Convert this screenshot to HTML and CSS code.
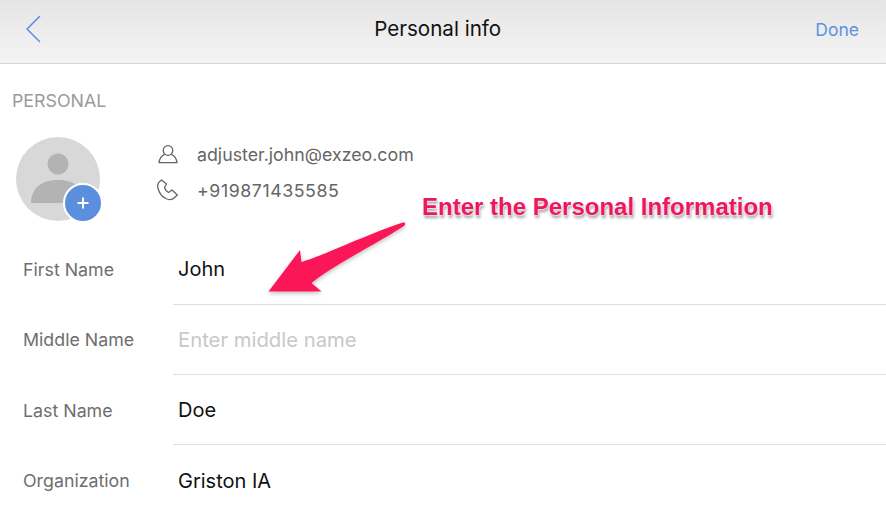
FILE: index.html
```html
<!DOCTYPE html>
<html>
	<head>
		<meta charset="utf-8" />
		<title>Personal info</title>
		<link rel="stylesheet" href="styles.css">
	</head>
	<body>
		<main class="screen">
			<header class="topbar">
				<svg class="back" width="18" height="28" viewBox="0 0 18 28">
					<path d="M15.5 1.5 L3 14 L15.5 26.5" />
				</svg>
				<h1>Personal info</h1>
				<span class="done">Done</span>
			</header>

			<h2 class="section-title">PERSONAL</h2>

			<section class="profile">
				<div class="avatar">
					<svg width="84" height="84" viewBox="0 0 84 84">
						<circle cx="42" cy="42" r="42" fill="#d8d8d8" />
						<circle cx="42" cy="27" r="10.5" fill="#b3b3b3" />
						<path d="M15 66 C15 50 27 43 42 43 C57 43 69 50 69 66 Z" fill="#b3b3b3" />
					</svg>
					<span class="avatar-add">
						<svg width="14" height="14" viewBox="0 0 14 14">
							<path d="M7 1.5 V12.5 M1.5 7 H12.5" />
						</svg>
					</span>
				</div>
				<div class="contacts">
					<div class="contact">
						<svg width="22" height="22" viewBox="0 0 22 22">
							<circle cx="11" cy="7.5" r="4.8" />
							<path d="M7.6 11.4 C5 12.6 2.6 15 2 19.7 H20 C19.4 15 17 12.6 14.4 11.4" />
						</svg>
						<span>adjuster.john@exzeo.com</span>
					</div>
					<div class="contact">
						<svg width="22" height="22" viewBox="0 0 22 22">
							<path d="M4.5 1 C1.5 3 0 6 1 9.5 C2.5 14.5 6 18.5 10 20 C13 21 15.5 20.5 17 19 L20.3 16 L15 11 L11.5 13.5 C9.5 12.5 8 10.5 7.5 8.5 L9.5 5 Z" />
						</svg>
						<span class="phone">+919871435585</span>
					</div>
				</div>
			</section>

			<form class="fields">
				<div class="field">
					<label>First Name</label>
					<div class="value">John</div>
				</div>
				<div class="field">
					<label>Middle Name</label>
					<div class="value placeholder">Enter middle name</div>
				</div>
				<div class="field">
					<label>Last Name</label>
					<div class="value">Doe</div>
				</div>
				<div class="field">
					<label>Organization</label>
					<div class="value">Griston IA</div>
				</div>
			</form>

			<!-- screenshot annotation, sits over the form -->
			<svg class="note-arrow" width="160" height="90" viewBox="0 0 160 90">
				<defs>
					<filter id="arrow-shadow" x="-20%" y="-20%" width="140%" height="150%">
						<feDropShadow dx="0" dy="2" stdDeviation="2" flood-color="#000" flood-opacity="0.25" />
					</filter>
				</defs>
				<path d="M8.5 74.5 L40 33 L41.5 45 C65 38 105 18 143 5.5 C145.5 5 146 7.5 144 9 C115 28 75 47 51.5 66 L61.5 74.5 Z" fill="#fb1458" filter="url(#arrow-shadow)" />
			</svg>
			<div class="note-text">Enter the Personal Information</div>
		</main>
	</body>
</html>
```

FILE: styles.css
```css
body {
	margin: 0;
	background: #fff;
	font-family: Inter, 'Noto Sans', sans-serif;
}
.screen {
	position: relative;
	height: 505px;
	overflow: hidden;
}
.topbar {
	display: flex;
	align-items: center;
	justify-content: space-between;
	box-sizing: border-box;
	height: 64px;
	padding: 0 27px 6px 24px;
	background: linear-gradient(#e5e5e5, #f4f4f4);
	border-bottom: 1px solid #d4d4d4;
}
.topbar h1 {
	margin: 0 0 0 18px;
	font-size: 20.6px;
	font-weight: 400;
	color: #111;
}
.back path {
	fill: none;
	stroke: #5b93e0;
	stroke-width: 1.6;
	stroke-linecap: round;
	stroke-linejoin: round;
}
.done {
	font-size: 17.5px;
	color: #5b93e0;
	padding-top: 2px;
}
.section-title {
	margin: 27px 0 0 12px;
	font-size: 17.8px;
	line-height: 20px;
	font-weight: 400;
	color: #9a9a9a;
}
.profile {
	display: flex;
	margin: 26px 0 0 16px;
}
.avatar {
	position: relative;
	width: 84px;
	height: 84px;
}
.avatar-add {
	position: absolute;
	right: -3px;
	bottom: -2px;
	display: flex;
	align-items: center;
	justify-content: center;
	box-sizing: border-box;
	width: 40px;
	height: 40px;
	border: 2px solid #fff;
	border-radius: 50%;
	background: #5b8fdd;
}
.avatar-add path {
	fill: none;
	stroke: #fff;
	stroke-width: 2;
}
.contacts {
	display: flex;
	flex-direction: column;
	gap: 14px;
	margin: 6px 0 0 57px;
}
.contact {
	display: flex;
	align-items: center;
	gap: 18px;
	height: 22px;
	font-size: 17.8px;
	color: #666;
}
.phone {
	letter-spacing: 0.55px;
}
.contact svg path,
.contact svg circle {
	fill: none;
	stroke: #666;
	stroke-width: 1.3;
	stroke-linejoin: round;
}
.fields {
	margin-top: 13.5px;
}
.field {
	display: flex;
	align-items: center;
	height: 70.33px;
	padding-left: 23px;
}
.field label {
	width: 150px;
	flex: none;
	font-size: 17.8px;
	color: #6e6e6e;
}
.value {
	flex: 1;
	align-self: stretch;
	display: flex;
	align-items: center;
	padding-left: 5px;
	font-size: 20px;
	color: #111;
	border-bottom: 1px solid #dedede;
}
.placeholder {
	font-size: 20.3px;
	color: #c8c8c8;
}
.field:last-child .value {
	border-bottom: 0;
}
.note-arrow {
	position: absolute;
	left: 260px;
	top: 217px;
}
.note-text {
	position: absolute;
	left: 422px;
	top: 193px;
	font-family: 'Liberation Sans', Arial, sans-serif;
	font-size: 24px;
	font-weight: 700;
	color: #ee1660;
	white-space: nowrap;
	text-shadow: 0 0 2px #fff, 0 0 2px #fff, 1px 3px 3px rgba(0, 0, 0, 0.4);
}
```
